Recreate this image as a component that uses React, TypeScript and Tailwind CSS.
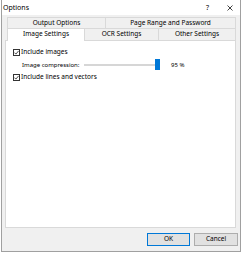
function Checkbox() {
  return (
    <span className="flex h-[7px] w-[7px] shrink-0 items-center justify-center border border-[#333333] bg-white">
      <svg width="5" height="5" viewBox="0 0 5 5">
        <path d="M0.4 2.6 L1.9 4.1 L4.6 0.9" fill="none" stroke="#222222" strokeWidth="0.8" />
      </svg>
    </span>
  );
}

function Tab({ label, className }: { label: string; className: string }) {
  return (
    <div className={`flex items-center justify-center border-t border-[#d9d9d9] ${className}`}>
      {label}
    </div>
  );
}

export default function App() {
  return (
    <div className="h-[253px] w-[242px] bg-white font-['Noto_Sans',sans-serif] text-[6.5px] leading-none text-black">
      <div className="ml-[1px] flex h-[252px] w-[240px] flex-col border-x border-b border-[#a0a0a0] bg-[#f0f0f0]">
        {/* title bar */}
        <div className="flex h-[15px] shrink-0 items-center bg-white">
          <span className="ml-[1px] text-[7px]">Options</span>
          <span className="ml-auto mr-[18px] text-[7px]">?</span>
          <svg className="mr-[7px]" width="6" height="6" viewBox="0 0 6 6">
            <path d="M0.5 0.5 L5.5 5.5 M5.5 0.5 L0.5 5.5" stroke="#111111" strokeWidth="0.8" />
          </svg>
        </div>

        <div className="flex flex-1 flex-col pl-[3px] pr-[4px] pt-[2px] pb-[5px]">
          {/* tab rows */}
          <div className="ml-[2px] flex h-[11px] w-[229px]">
            <Tab label="Output Options" className="w-[98px] border-l" />
            <Tab label="Page Range and Password" className="w-[131px] border-x" />
          </div>
          <div className="ml-[2px] flex h-[12px] w-[229px] items-start">
            <Tab
              label="Image Settings"
              className="relative z-10 h-[13px] w-[78px] border-x bg-white pb-[1px]"
            />
            <Tab label="OCR Settings" className="h-[12px] w-[74px] border-r" />
            <Tab label="Other Settings" className="h-[12px] w-[77px] border-r" />
          </div>

          {/* panel */}
          <div className="flex flex-1 flex-col border border-[#d9d9d9] bg-white pl-[7px] pt-[8px]">
            <div className="flex h-[7px] items-center gap-[1px]">
              <Checkbox />
              <span>Include images</span>
            </div>
            <div className="mt-[3px] flex h-[11px] items-center">
              <span className="ml-[9px] w-[62px] text-[6px]">Image compression:</span>
              <div className="relative flex h-[11px] w-[76px] items-center">
                <div className="h-[2px] w-full border border-[#d6d6d6] bg-[#e7e7e7]" />
                <div className="absolute left-[71px] top-0 h-[11px] w-[5px] bg-[#0078d7]" />
              </div>
              <span className="ml-[11px] text-[6px]">95 %</span>
            </div>
            <div className="mt-[4px] flex h-[7px] items-center gap-[1px]">
              <Checkbox />
              <span>Include lines and vectors</span>
            </div>
          </div>

          {/* buttons */}
          <div className="-mr-[2px] mt-[5px] flex h-[13px] shrink-0 justify-end gap-[4px]">
            <button className="w-[43px] border border-[#0078d7] bg-[#e1e1e1] text-[6.5px]">OK</button>
            <button className="w-[44px] border border-[#adadad] bg-[#e1e1e1] text-[6.5px]">Cancel</button>
          </div>
        </div>
      </div>
    </div>
  );
}
